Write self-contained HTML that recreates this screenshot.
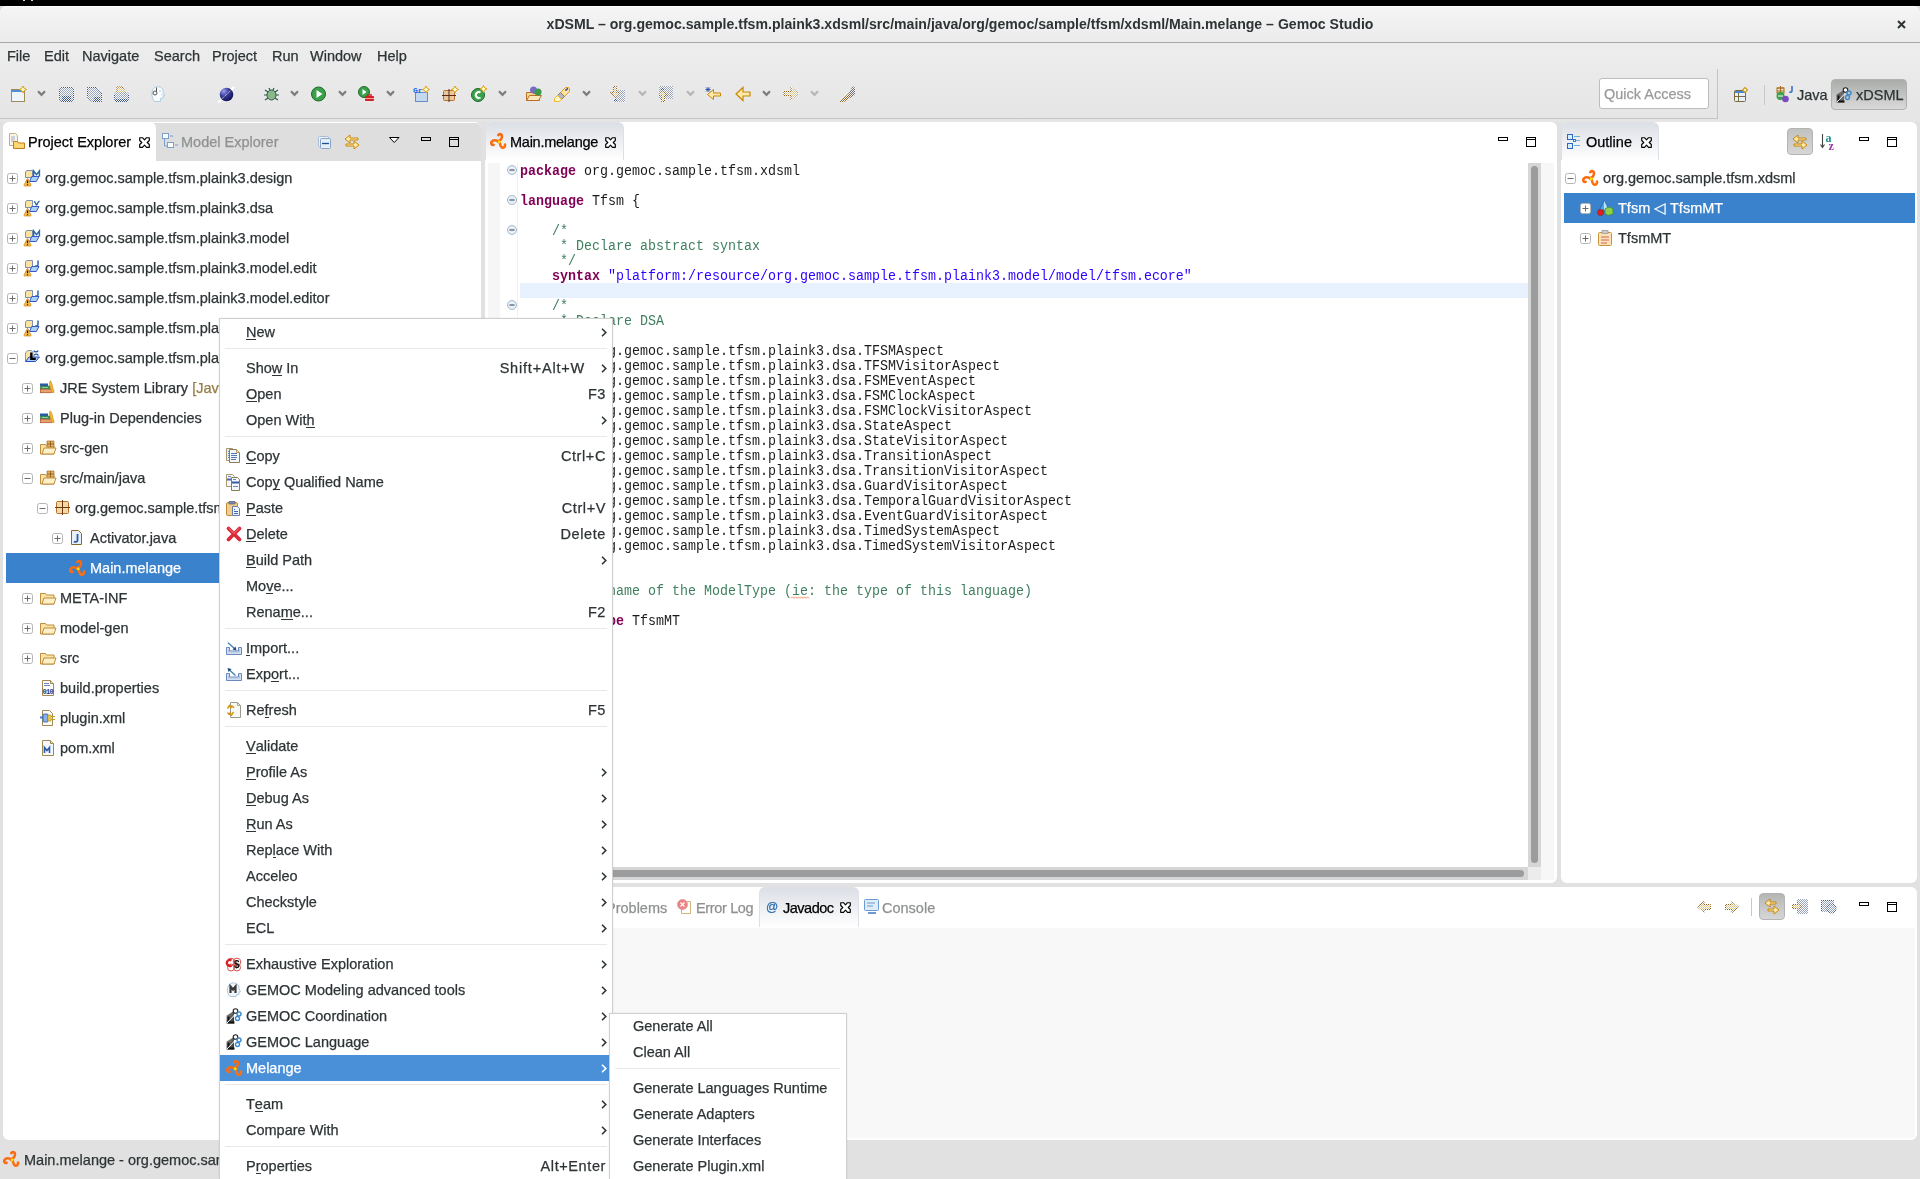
<!DOCTYPE html><html><head><meta charset="utf-8"><style>
*{box-sizing:border-box;margin:0;padding:0}
html,body{width:1920px;height:1179px;overflow:hidden;background:#e1e1e1;font-family:"Liberation Sans", sans-serif;font-size:14.5px;color:#2e3436}
.abs{position:absolute}
.t,.m{will-change:transform}
.t{-webkit-text-stroke:0.25px currentColor}
.t{position:absolute;white-space:nowrap;line-height:17px;height:17px}
.m{position:absolute;white-space:pre;font-family:"Liberation Mono", monospace;font-size:13.33px;line-height:15px;height:15px;color:#1a1a1a;transform:scaleY(1.1);transform-origin:0 11px}
.k{color:#7f0055;font-weight:bold}
.c{color:#3f7f5f}
.s{color:#2a00ff}
svg{position:absolute;overflow:visible}
u{text-decoration:none;border-bottom:1px solid currentColor;display:inline-block;line-height:14px}
</style></head><body>
<svg width="0" height="0" style="position:absolute;left:0;top:0"><defs><pattern id="pN" width="2" height="2" patternUnits="userSpaceOnUse"><rect width="2" height="2" fill="#fbfbfb"/><rect width="1" height="1" fill="#3a5488"/><rect x="1" y="1" width="1" height="1" fill="#3a5488"/></pattern><pattern id="pL" width="2" height="2" patternUnits="userSpaceOnUse"><rect width="2" height="2" fill="#fbfbfb"/><rect width="1" height="1" fill="#9aa6bc"/><rect x="1" y="1" width="1" height="1" fill="#9aa6bc"/></pattern><pattern id="pG" width="2" height="2" patternUnits="userSpaceOnUse"><rect width="2" height="2" fill="#fbfbfb"/><rect width="1" height="1" fill="#94621a"/><rect x="1" y="1" width="1" height="1" fill="#94621a"/></pattern><pattern id="pY" width="2" height="2" patternUnits="userSpaceOnUse"><rect width="2" height="2" fill="#fbfbfb"/><rect width="1" height="1" fill="#d8c890"/><rect x="1" y="1" width="1" height="1" fill="#d8c890"/></pattern><pattern id="pK" width="2" height="2" patternUnits="userSpaceOnUse"><rect width="2" height="2" fill="#f0f0f0"/><rect width="1" height="1" fill="#707070"/><rect x="1" y="1" width="1" height="1" fill="#707070"/></pattern></defs></svg>
<div class="abs" style="left:0px;top:0px;width:1920px;height:6px;background:#000"></div>
<div class="abs" style="left:0px;top:6px;width:1920px;height:37px;background:linear-gradient(#f5f5f5,#ebebeb);border-top:1px solid #fff;border-radius:7px 7px 0 0;border-bottom:1px solid #a9a9a7"></div>
<div class="abs" style="left:23px;top:0px;width:2px;height:1px;background:#ddd"></div>
<div class="abs" style="left:31px;top:0px;width:2px;height:1px;background:#ddd"></div>
<div class="t" style="left:2px;width:1916px;top:16px;text-align:center;font-weight:bold;font-size:14.1px;color:#2e3436;-webkit-text-stroke:0">xDSML – org.gemoc.sample.tfsm.plaink3.xdsml/src/main/java/org/gemoc/sample/tfsm/xdsml/Main.melange – Gemoc Studio</div>
<svg style="left:1897px;top:20px;" width="9" height="9" viewBox="0 0 9 9"><path d="M1 1L8 8M8 1L1 8" stroke="#2e3436" stroke-width="2"/></svg>
<div class="abs" style="left:0px;top:43px;width:1920px;height:79px;background:linear-gradient(#ededed,#e5e5e5)"></div>
<div class="abs" style="left:0px;top:118px;width:1718px;height:1px;background:#c4c4c4"></div>
<div class="abs" style="left:1717px;top:69px;width:1px;height:50px;background:#c4c4c4"></div>
<div class="t" style="left:7px;top:48px;">File</div>
<div class="t" style="left:44px;top:48px;">Edit</div>
<div class="t" style="left:82px;top:48px;">Navigate</div>
<div class="t" style="left:154px;top:48px;">Search</div>
<div class="t" style="left:212px;top:48px;">Project</div>
<div class="t" style="left:272px;top:48px;">Run</div>
<div class="t" style="left:310px;top:48px;">Window</div>
<div class="t" style="left:377px;top:48px;">Help</div>
<svg style="left:11px;top:86px;" width="16" height="16" viewBox="0 0 16 16"><rect x="0.5" y="3.5" width="13" height="12" fill="#eef5fc" stroke="#a08a55"/><rect x="1" y="4" width="12" height="2" fill="#4a90d9"/><path d="M12 0.0L13.2 2.3L15.5 3.5L13.2 4.7L12 7.0L10.8 4.7L8.5 3.5L10.8 2.3Z" fill="#fffbd0" stroke="#d9a010" stroke-width="1"/></svg>
<svg style="left:37px;top:90px;" width="10" height="7" viewBox="0 0 10 7"><path d="M1 1.2L4.5 4.8L8 1.2" fill="none" stroke="#7b7d7b" stroke-width="2.2"/></svg>
<svg style="left:59px;top:87px;" width="16" height="16" viewBox="0 0 16 16"><rect x="0" y="0" width="15" height="15" rx="2" fill="url(#pL)"/><rect x="0.5" y="0.5" width="14" height="14" rx="2" fill="none" stroke="url(#pN)"/><rect x="3" y="9" width="9" height="6" fill="url(#pN)"/></svg>
<svg style="left:87px;top:87px;" width="16" height="16" viewBox="0 0 16 16"><path d="M0 0h9l6 6v9H5L0 10z" fill="url(#pL)"/><path d="M0.5 0.5h8.5l5.5 5.5v8.5H5L0.5 10z" fill="none" stroke="url(#pN)"/><rect x="7" y="10" width="6" height="5" fill="url(#pN)"/></svg>
<svg style="left:114px;top:87px;" width="16" height="16" viewBox="0 0 16 16"><path d="M3 0h5l3 4v5H3z" fill="url(#pY)" stroke="url(#pG)"/><rect x="0" y="5" width="15" height="10" rx="3" fill="url(#pL)"/><path d="M0.5 8v3c0 2 1 3.5 3 3.5h8c2 0 3-1.5 3-3.5V8" fill="none" stroke="url(#pN)"/><rect x="1" y="12" width="13" height="3" fill="url(#pN)"/></svg>
<svg style="left:151px;top:86px;" width="16" height="16" viewBox="0 0 16 16"><path d="M3.5 15.5c-1.5-2-3-5-2.5-9C1.5 2 4.5 0.5 7.5 0.8c3 0.3 5 2.5 4.7 5.5l1.5 3-1.5 0.5v2l-2.5 0.5v3z" fill="#fbfdfe" stroke="#a8cde0"/><circle cx="9" cy="5" r="1.2" fill="#cfe4f0"/><circle cx="11" cy="8.5" r="1" fill="#cfe4f0"/><path d="M5.5 1.5v5" stroke="#555" stroke-width="1"/><circle cx="4" cy="7" r="2" fill="#fff" stroke="#555" stroke-width="1"/></svg>
<svg style="left:218px;top:87px;" width="16" height="16" viewBox="0 0 16 16"><defs><radialGradient id="gg" cx="0.3" cy="0.25" r="0.85"><stop offset="0" stop-color="#9aa0f0"/><stop offset="0.45" stop-color="#3a3a98"/><stop offset="1" stop-color="#0c0c48"/></radialGradient></defs><circle cx="8.5" cy="7.5" r="6.8" fill="url(#gg)"/><path d="M1 14.5L15.5 1" stroke="#fff" stroke-width="0.9" stroke-dasharray="1.2 0.8" opacity="0.85"/><path d="M0.5 15l2-1.5M14 2l1.5-1.5" stroke="#fff" stroke-width="2" stroke-linecap="round"/></svg>
<svg style="left:263px;top:86px;" width="16" height="16" viewBox="0 0 16 16"><ellipse cx="8.5" cy="9" rx="4.5" ry="5" fill="#8ab88a" stroke="#2f5a4a"/><path d="M2 4l3 2M1 9h3M2 14l3-2M15 4l-3 2M16 9h-3M15 14l-3-2M6 2l1 2M11 2l-1 2" stroke="#2f5a4a" stroke-width="1.2"/></svg>
<svg style="left:290px;top:90px;" width="10" height="7" viewBox="0 0 10 7"><path d="M1 1.2L4.5 4.8L8 1.2" fill="none" stroke="#7b7d7b" stroke-width="2.2"/></svg>
<svg style="left:311px;top:86px;" width="16" height="16" viewBox="0 0 16 16"><circle cx="7.5" cy="8" r="7" fill="#3ba04a" stroke="#1f6a2a"/><path d="M5.5 4l6 4-6 4z" fill="#fff"/></svg>
<svg style="left:338px;top:90px;" width="10" height="7" viewBox="0 0 10 7"><path d="M1 1.2L4.5 4.8L8 1.2" fill="none" stroke="#7b7d7b" stroke-width="2.2"/></svg>
<svg style="left:358px;top:86px;" width="16" height="16" viewBox="0 0 16 16"><circle cx="6" cy="6" r="5.5" fill="#3ba04a" stroke="#1f6a2a"/><path d="M4.5 3l4 3-4 3z" fill="#fff"/><rect x="7" y="10" width="9" height="5" rx="1" fill="#d42020"/><path d="M9 9h5" stroke="#d42020" stroke-width="1.5"/><path d="M7 12.5h9" stroke="#fff" stroke-width="0.6"/></svg>
<svg style="left:386px;top:90px;" width="10" height="7" viewBox="0 0 10 7"><path d="M1 1.2L4.5 4.8L8 1.2" fill="none" stroke="#7b7d7b" stroke-width="2.2"/></svg>
<svg style="left:413px;top:86px;" width="16" height="16" viewBox="0 0 16 16"><rect x="2.5" y="6.5" width="12" height="9" fill="#c4d8f0" stroke="#6a8ac8"/><text x="0" y="7" font-size="8" font-family="Liberation Mono" font-weight="bold" fill="#1a6af0">Gr</text><path d="M13 0.0L14.2 2.3L16.5 3.5L14.2 4.7L13 7.0L11.8 4.7L9.5 3.5L11.8 2.3Z" fill="#fffbd0" stroke="#d9a010" stroke-width="1"/></svg>
<svg style="left:442px;top:86px;" width="16" height="16" viewBox="0 0 16 16"><rect x="1.5" y="4.5" width="11" height="10" rx="1" fill="#e8c8a0" stroke="#b8702a"/><path d="M7 3v13M0 9.5h14" stroke="#5a2a10"/><path d="M13 0.0L14.2 2.3L16.5 3.5L14.2 4.7L13 7.0L11.8 4.7L9.5 3.5L11.8 2.3Z" fill="#fffbd0" stroke="#d9a010" stroke-width="1"/></svg>
<svg style="left:470px;top:86px;" width="16" height="16" viewBox="0 0 16 16"><circle cx="8" cy="9" r="6.5" fill="#3ba04a" stroke="#1f6a2a"/><path d="M10.5 6.5a3 3 0 1 0 0 5" fill="none" stroke="#fff" stroke-width="2"/><path d="M13.5 -0.5L14.7 1.8L17.0 3L14.7 4.2L13.5 6.5L12.3 4.2L10.0 3L12.3 1.8Z" fill="#fffbd0" stroke="#d9a010" stroke-width="1"/></svg>
<svg style="left:498px;top:90px;" width="10" height="7" viewBox="0 0 10 7"><path d="M1 1.2L4.5 4.8L8 1.2" fill="none" stroke="#7b7d7b" stroke-width="2.2"/></svg>
<svg style="left:526px;top:86px;" width="16" height="16" viewBox="0 0 16 16"><path d="M0.5 6.5h6l1 1h6v7h-13z" fill="#f7d591" stroke="#b8702a"/><path d="M0.5 14.5l3-5h12l-3 5z" fill="#fbe7b8" stroke="#b8702a"/><circle cx="7.5" cy="4" r="3.5" fill="#7a6ac8"/><circle cx="12" cy="6" r="3.5" fill="#3a9a4a"/></svg>
<svg style="left:554px;top:86px;" width="16" height="16" viewBox="0 0 16 16"><path d="M6.5 6.5L11.5 1.5h3l1 1v3l-5 5z" fill="#fbe3a0" stroke="#e49a1c"/><path d="M3.5 9.5l3-3 4 4-3 3z" fill="#b8b4c0" stroke="#9a7a40"/><path d="M0.5 15.5v-3l3-3 4 4-2.5 2z" fill="#fff8c8" stroke="#f0b830"/><circle cx="12" cy="4" r="0.9" fill="#2a4ab0"/><circle cx="13.3" cy="3" r="0.9" fill="#2a4ab0"/></svg>
<svg style="left:582px;top:90px;" width="10" height="7" viewBox="0 0 10 7"><path d="M1 1.2L4.5 4.8L8 1.2" fill="none" stroke="#7b7d7b" stroke-width="2.2"/></svg>
<svg style="left:610px;top:86px;" width="16" height="16" viewBox="0 0 16 16"><rect x="5" y="4" width="10" height="12" fill="url(#pL)"/><path d="M3.5 0.5h3v6h3l-4.5 5-4.5-5h3z" fill="url(#pY)" stroke="url(#pG)"/><rect x="4" y="13" width="3" height="2" fill="url(#pN)"/></svg>
<svg style="left:638px;top:90px;" width="10" height="7" viewBox="0 0 10 7"><path d="M1 1.2L4.5 4.8L8 1.2" fill="none" stroke="#b5b7b5" stroke-width="2.2"/></svg>
<svg style="left:658px;top:86px;" width="16" height="16" viewBox="0 0 16 16"><rect x="1" y="0" width="14" height="13" fill="url(#pL)"/><path d="M3.5 15.5h3v-6h3l-4.5-5-4.5 5h3z" fill="url(#pY)" stroke="url(#pG)"/><rect x="3" y="2" width="3" height="2" fill="url(#pN)"/></svg>
<svg style="left:686px;top:90px;" width="10" height="7" viewBox="0 0 10 7"><path d="M1 1.2L4.5 4.8L8 1.2" fill="none" stroke="#b5b7b5" stroke-width="2.2"/></svg>
<svg style="left:705px;top:86px;" width="16" height="16" viewBox="0 0 16 16"><path d="M15.5 7h-7v-3.5l-6 5 6 5v-3.5h7z" fill="#fde9a8" stroke="#c8860a"/><path d="M3 1v5M0.5 3.5h5M1 1.5l4 4M5 1.5l-4 4" stroke="#2a50a8" stroke-width="0.9"/></svg>
<svg style="left:735px;top:86px;" width="16" height="16" viewBox="0 0 16 16"><path d="M15 6h-7v-4.5l-7 6.5 7 6.5v-4.5h7z" fill="#fde9a8" stroke="#c8860a" stroke-width="1.2"/></svg>
<svg style="left:762px;top:90px;" width="10" height="7" viewBox="0 0 10 7"><path d="M1 1.2L4.5 4.8L8 1.2" fill="none" stroke="#7b7d7b" stroke-width="2.2"/></svg>
<svg style="left:783px;top:86px;" width="16" height="16" viewBox="0 0 16 16"><path d="M1 5.5h7v-4.5l7 6.5-7 6.5v-4.5h-7z" fill="url(#pY)" stroke="url(#pG)"/></svg>
<svg style="left:810px;top:90px;" width="10" height="7" viewBox="0 0 10 7"><path d="M1 1.2L4.5 4.8L8 1.2" fill="none" stroke="#b5b7b5" stroke-width="2.2"/></svg>
<svg style="left:839px;top:86px;" width="16" height="16" viewBox="0 0 16 16"><path d="M9 8l5-8 2 2v7l-5 3z" fill="url(#pK)"/><path d="M0 16l9-8 3 3-7 5z" fill="url(#pG)"/></svg>
<div class="abs" style="left:1599px;top:78px;width:110px;height:31px;background:#fff;border:1px solid #bdbdbd;border-radius:3px"></div>
<div class="t" style="left:1604px;top:86px;color:#9a9a9a">Quick Access</div>
<svg style="left:1734px;top:87px;" width="16" height="16" viewBox="0 0 16 16"><rect x="0.5" y="3.5" width="11" height="11" rx="1" fill="#e4f2fc" stroke="#7a6a40"/><rect x="1" y="4" width="10" height="2" fill="#4a88d0"/><path d="M4.5 6v8.5M1 9.5h10.5" stroke="#7a6a40"/><path d="M11 0.5L13.5 3L11 5.5L8.5 3z" fill="#fff8d0" stroke="#c89a10" stroke-width="1.1"/></svg>
<div class="abs" style="left:1764px;top:85px;width:1px;height:20px;background:#c8c8c8"></div>
<svg style="left:1776px;top:86px;" width="18" height="16" viewBox="0 0 18 16"><path d="M1 2h7M4.5 0v7M1 5h7" stroke="#a86d1a" stroke-width="1.1" fill="none"/><rect x="1" y="2" width="7" height="5" fill="none" stroke="#a86d1a"/><circle cx="4.5" cy="10" r="4" fill="#3ba04a"/><path d="M2 10h5" stroke="#fff" stroke-width="1"/><circle cx="9.5" cy="13" r="3.3" fill="#7a4ac0"/><path d="M16 0v5c0 1.5-2 1.7-2.5 0.7" fill="none" stroke="#2a6ac8" stroke-width="1.5"/></svg>
<div class="t" style="left:1797px;top:87px;">Java</div>
<div class="abs" style="left:1831px;top:79px;width:76px;height:31px;background:linear-gradient(#a9aca9,#dadada);border:1px solid #b0b0b0;border-radius:4px"></div>
<svg style="left:1836px;top:87px;" width="16" height="16" viewBox="0 0 16 16"><path d="M0.5 7.5L8 3v12.5H0.5z" fill="#6a6a6a"/><path d="M1.5 8.5v7h7v-2h-5v-5z" fill="#111"/><path d="M1 15l8-8.5" stroke="#fff" stroke-width="1"/><circle cx="9.5" cy="3" r="2.3" fill="#fff" stroke="#222" stroke-width="1.1"/><circle cx="13" cy="6" r="2" fill="none" stroke="#3a8ad0" stroke-width="1.4"/><circle cx="11.5" cy="10.5" r="2" fill="none" stroke="#3a8ad0" stroke-width="1.4"/></svg>
<div class="t" style="left:1856px;top:87px;">xDSML</div>
<div class="abs" style="left:3px;top:122px;width:478px;height:1018px;background:#fff;border-radius:6px"></div>
<div class="abs" style="left:140px;top:123px;width:341px;height:38px;background:#dedede;border-radius:0 5px 0 0"></div>
<div class="abs" style="left:3px;top:122px;width:153px;height:39px;background:#fff;border-radius:6px 6px 0 0"></div>
<svg style="left:9px;top:133px;" width="16" height="16" viewBox="0 0 16 16"><path d="M0.5 0.5h6l2 2v10h-8z" fill="#f8f4e8" stroke="#b0a070" stroke-width="0.8"/><path d="M2 4h4M2 6h4M2 8h3" stroke="#8aa0c8" stroke-width="0.8"/><path d="M4.5 8.5h4l1 1.5h6v5.5h-11z" fill="#fbd875" stroke="#c07a20"/></svg>
<div class="t" style="left:28px;top:134px;color:#000">Project Explorer</div>
<svg style="left:139px;top:137px;" width="11" height="11" viewBox="0 0 11 11"><path d="M0.7 0.7H3.5L5.5 2.8L7.5 0.7H10.3V3.5L8.2 5.5L10.3 7.5V10.3H7.5L5.5 8.2L3.5 10.3H0.7V7.5L2.8 5.5L0.7 3.5Z" fill="#fff" stroke="#000" stroke-width="1.15" stroke-linejoin="round"/></svg>
<svg style="left:162px;top:133px;" width="16" height="16" viewBox="0 0 16 16"><rect x="0.5" y="0.5" width="6" height="5" fill="#fff" stroke="#7aa0d0"/><path d="M2.5 6v7h3" fill="none" stroke="#7aa0d0"/><rect x="5.5" y="9.5" width="6" height="5" fill="#fff" stroke="#7aa0d0"/><path d="M8 3h3M13 12h3" stroke="#7aa0d0"/></svg>
<div class="t" style="left:181px;top:134px;color:#8f9191">Model Explorer</div>
<svg style="left:318px;top:136px;" width="14" height="14" viewBox="0 0 14 14"><rect x="0.5" y="0.5" width="10" height="10" rx="1" fill="#eef4fb" stroke="#a8bcd8"/><rect x="2.5" y="2.5" width="10" height="10" rx="1" fill="#e4eef9" stroke="#8aa4c8"/><path d="M4 7.5h7" stroke="#1f4f8f" stroke-width="1.3"/></svg>
<svg style="left:344px;top:133px;" width="16" height="16" viewBox="0 0 16 16"><path d="M14 5H6V2L1 6l5 4V7h8z" fill="#fde9a8" stroke="#c8860a"/><path d="M2 11h8V8l5 4-5 4v-3H2z" fill="#fde9a8" stroke="#c8860a"/></svg>
<svg style="left:389px;top:137px;" width="11" height="6" viewBox="0 0 11 6"><path d="M0.5 0.5h9.5L5.25 5.5z" fill="#fff" stroke="#000" stroke-linejoin="round"/></svg>
<svg style="left:421px;top:137px;" width="11" height="5" viewBox="0 0 11 5"><rect x="0.5" y="0.5" width="9" height="3" fill="none" stroke="#000" stroke-width="1"/></svg>
<svg style="left:449px;top:137px;" width="11" height="11" viewBox="0 0 11 11"><rect x="0.5" y="0.5" width="9" height="9" fill="none" stroke="#000" stroke-width="1"/><path d="M1 2.5h8" stroke="#000" stroke-width="1"/></svg>
<svg style="left:7px;top:173px;" width="11" height="11" viewBox="0 0 11 11"><rect x="0.5" y="0.5" width="10" height="10" rx="2" fill="#fff" stroke="#b4b6b3"/><path d="M2.5 5.5H8.5" stroke="#6c6c6c" stroke-width="1"/><path d="M5.5 2.5V8.5" stroke="#6c6c6c" stroke-width="1"/></svg>
<svg style="left:24px;top:170px;" width="16" height="16" viewBox="0 0 16 16"><path d="M1.5 7.5V2l1.2-1.5h5.8v7z" fill="#fde3a0" stroke="#7f8fb0" stroke-width="1"/><path d="M5.5 11.5l2.2-5h7.3l-2.7 5z" fill="#a9d3f7" stroke="#3a56c8" stroke-width="1"/><path d="M9.6 6.5V1l2.9 3.6 2.9-3.6v5.5" fill="none" stroke="#2c6aa6" stroke-width="1.5"/><path d="M3.5 8.3l3.4 6.6c0.3 0.6 0 1-0.6 1H0.7c-0.6 0-0.9-0.4-0.6-1z" fill="#f9c54a" stroke="#d6891c" stroke-width="0.9"/><path d="M3.5 10.6v2.6M3.5 14.2v1" stroke="#1a1a1a" stroke-width="1.3"/></svg>
<div class="t" style="left:45px;top:170px;">org.gemoc.sample.tfsm.plaink3.design</div>
<svg style="left:7px;top:203px;" width="11" height="11" viewBox="0 0 11 11"><rect x="0.5" y="0.5" width="10" height="10" rx="2" fill="#fff" stroke="#b4b6b3"/><path d="M2.5 5.5H8.5" stroke="#6c6c6c" stroke-width="1"/><path d="M5.5 2.5V8.5" stroke="#6c6c6c" stroke-width="1"/></svg>
<svg style="left:24px;top:200px;" width="16" height="16" viewBox="0 0 16 16"><path d="M1.5 7.5V2l1.2-1.5h5.8v7z" fill="#fde3a0" stroke="#7f8fb0" stroke-width="1"/><path d="M5.5 11.5l2.2-5h7.3l-2.7 5z" fill="#a9d3f7" stroke="#3a56c8" stroke-width="1"/><path d="M10 1.5c1.5 0 2 3.5 2.5 3.5s1-2.5 3-4" fill="none" stroke="#2c6aa6" stroke-width="1.4"/><path d="M3.5 8.3l3.4 6.6c0.3 0.6 0 1-0.6 1H0.7c-0.6 0-0.9-0.4-0.6-1z" fill="#f9c54a" stroke="#d6891c" stroke-width="0.9"/><path d="M3.5 10.6v2.6M3.5 14.2v1" stroke="#1a1a1a" stroke-width="1.3"/></svg>
<div class="t" style="left:45px;top:200px;">org.gemoc.sample.tfsm.plaink3.dsa</div>
<svg style="left:7px;top:233px;" width="11" height="11" viewBox="0 0 11 11"><rect x="0.5" y="0.5" width="10" height="10" rx="2" fill="#fff" stroke="#b4b6b3"/><path d="M2.5 5.5H8.5" stroke="#6c6c6c" stroke-width="1"/><path d="M5.5 2.5V8.5" stroke="#6c6c6c" stroke-width="1"/></svg>
<svg style="left:24px;top:230px;" width="16" height="16" viewBox="0 0 16 16"><path d="M1.5 7.5V2l1.2-1.5h5.8v7z" fill="#fde3a0" stroke="#7f8fb0" stroke-width="1"/><path d="M5.5 11.5l2.2-5h7.3l-2.7 5z" fill="#a9d3f7" stroke="#3a56c8" stroke-width="1"/><path d="M9.6 6.5V1l2.9 3.6 2.9-3.6v5.5" fill="none" stroke="#2c6aa6" stroke-width="1.5"/><path d="M3.5 8.3l3.4 6.6c0.3 0.6 0 1-0.6 1H0.7c-0.6 0-0.9-0.4-0.6-1z" fill="#f9c54a" stroke="#d6891c" stroke-width="0.9"/><path d="M3.5 10.6v2.6M3.5 14.2v1" stroke="#1a1a1a" stroke-width="1.3"/></svg>
<div class="t" style="left:45px;top:230px;">org.gemoc.sample.tfsm.plaink3.model</div>
<svg style="left:7px;top:263px;" width="11" height="11" viewBox="0 0 11 11"><rect x="0.5" y="0.5" width="10" height="10" rx="2" fill="#fff" stroke="#b4b6b3"/><path d="M2.5 5.5H8.5" stroke="#6c6c6c" stroke-width="1"/><path d="M5.5 2.5V8.5" stroke="#6c6c6c" stroke-width="1"/></svg>
<svg style="left:24px;top:260px;" width="16" height="16" viewBox="0 0 16 16"><path d="M1.5 7.5V2l1.2-1.5h5.8v7z" fill="#fde3a0" stroke="#7f8fb0" stroke-width="1"/><path d="M5.5 11.5l2.2-5h7.3l-2.7 5z" fill="#a9d3f7" stroke="#3a56c8" stroke-width="1"/><path d="M14 0.5v4.2c0 1.4-1.8 1.6-2.6 0.8" fill="none" stroke="#2c6aa6" stroke-width="1.5"/><path d="M3.5 8.3l3.4 6.6c0.3 0.6 0 1-0.6 1H0.7c-0.6 0-0.9-0.4-0.6-1z" fill="#f9c54a" stroke="#d6891c" stroke-width="0.9"/><path d="M3.5 10.6v2.6M3.5 14.2v1" stroke="#1a1a1a" stroke-width="1.3"/></svg>
<div class="t" style="left:45px;top:260px;">org.gemoc.sample.tfsm.plaink3.model.edit</div>
<svg style="left:7px;top:293px;" width="11" height="11" viewBox="0 0 11 11"><rect x="0.5" y="0.5" width="10" height="10" rx="2" fill="#fff" stroke="#b4b6b3"/><path d="M2.5 5.5H8.5" stroke="#6c6c6c" stroke-width="1"/><path d="M5.5 2.5V8.5" stroke="#6c6c6c" stroke-width="1"/></svg>
<svg style="left:24px;top:290px;" width="16" height="16" viewBox="0 0 16 16"><path d="M1.5 7.5V2l1.2-1.5h5.8v7z" fill="#fde3a0" stroke="#7f8fb0" stroke-width="1"/><path d="M5.5 11.5l2.2-5h7.3l-2.7 5z" fill="#a9d3f7" stroke="#3a56c8" stroke-width="1"/><path d="M14 0.5v4.2c0 1.4-1.8 1.6-2.6 0.8" fill="none" stroke="#2c6aa6" stroke-width="1.5"/><path d="M3.5 8.3l3.4 6.6c0.3 0.6 0 1-0.6 1H0.7c-0.6 0-0.9-0.4-0.6-1z" fill="#f9c54a" stroke="#d6891c" stroke-width="0.9"/><path d="M3.5 10.6v2.6M3.5 14.2v1" stroke="#1a1a1a" stroke-width="1.3"/></svg>
<div class="t" style="left:45px;top:290px;">org.gemoc.sample.tfsm.plaink3.model.editor</div>
<svg style="left:7px;top:323px;" width="11" height="11" viewBox="0 0 11 11"><rect x="0.5" y="0.5" width="10" height="10" rx="2" fill="#fff" stroke="#b4b6b3"/><path d="M2.5 5.5H8.5" stroke="#6c6c6c" stroke-width="1"/><path d="M5.5 2.5V8.5" stroke="#6c6c6c" stroke-width="1"/></svg>
<svg style="left:24px;top:320px;" width="16" height="16" viewBox="0 0 16 16"><path d="M1.5 7.5V2l1.2-1.5h5.8v7z" fill="#fde3a0" stroke="#7f8fb0" stroke-width="1"/><path d="M5.5 11.5l2.2-5h7.3l-2.7 5z" fill="#a9d3f7" stroke="#3a56c8" stroke-width="1"/><path d="M14 0.5v4.2c0 1.4-1.8 1.6-2.6 0.8" fill="none" stroke="#2c6aa6" stroke-width="1.5"/><path d="M3.5 8.3l3.4 6.6c0.3 0.6 0 1-0.6 1H0.7c-0.6 0-0.9-0.4-0.6-1z" fill="#f9c54a" stroke="#d6891c" stroke-width="0.9"/><path d="M3.5 10.6v2.6M3.5 14.2v1" stroke="#1a1a1a" stroke-width="1.3"/></svg>
<div class="t" style="left:45px;top:320px;">org.gemoc.sample.tfsm.plaink3.xdsml.api</div>
<svg style="left:7px;top:353px;" width="11" height="11" viewBox="0 0 11 11"><rect x="0.5" y="0.5" width="10" height="10" rx="2" fill="#fff" stroke="#b4b6b3"/><path d="M2.5 5.5H8.5" stroke="#6c6c6c" stroke-width="1"/></svg>
<svg style="left:24px;top:350px;" width="16" height="16" viewBox="0 0 16 16"><path d="M1.5 11V3l2-2.5h4l1.5 2v7z" fill="#fde4a4" stroke="#8a98b8"/><path d="M1.5 11.5l3.5-4.5h10.5l-4 4.5z" fill="#a8d2f4" stroke="#2a48c0"/><path d="M7.3 2.5v6.3h4.5" fill="none" stroke="#000" stroke-width="2.3"/><path d="M9.8 0.6c1 1.6 3.4 1.6 4.4 0M10.2 5.5c0.6-1.8 3.6-1.8 4 0.2" fill="none" stroke="#1a5aa0" stroke-width="1.3"/></svg>
<div class="t" style="left:45px;top:350px;">org.gemoc.sample.tfsm.plaink3.xdsml</div>
<svg style="left:22px;top:383px;" width="11" height="11" viewBox="0 0 11 11"><rect x="0.5" y="0.5" width="10" height="10" rx="2" fill="#fff" stroke="#b4b6b3"/><path d="M2.5 5.5H8.5" stroke="#6c6c6c" stroke-width="1"/><path d="M5.5 2.5V8.5" stroke="#6c6c6c" stroke-width="1"/></svg>
<svg style="left:40px;top:380px;" width="16" height="16" viewBox="0 0 16 16"><rect x="0" y="3.5" width="8" height="2.5" fill="#2a5ab0"/><rect x="0.5" y="6" width="9.5" height="3" fill="#3d9a62" stroke="#2a6a40" stroke-width="0.6"/><path d="M2 7.5h6" stroke="#a0e0b0" stroke-width="0.8"/><rect x="0.5" y="9.2" width="11" height="3.5" fill="#e8a070" stroke="#b05a2a" stroke-width="0.8"/><path d="M10 1c1 0 1.5 1 1.5 2l1 2.5 0.5 3 1 2.5v1.5h-2.5l-0.5-3-1-3-0.5-3z" fill="#f2b830" stroke="#c88a10" stroke-width="0.6"/></svg>
<div class="t" style="left:60px;top:380px;">JRE System Library <span style="color:#957d47">[JavaSE-1.8]</span></div>
<svg style="left:22px;top:413px;" width="11" height="11" viewBox="0 0 11 11"><rect x="0.5" y="0.5" width="10" height="10" rx="2" fill="#fff" stroke="#b4b6b3"/><path d="M2.5 5.5H8.5" stroke="#6c6c6c" stroke-width="1"/><path d="M5.5 2.5V8.5" stroke="#6c6c6c" stroke-width="1"/></svg>
<svg style="left:40px;top:410px;" width="16" height="16" viewBox="0 0 16 16"><rect x="0" y="3.5" width="8" height="2.5" fill="#2a5ab0"/><rect x="0.5" y="6" width="9.5" height="3" fill="#3d9a62" stroke="#2a6a40" stroke-width="0.6"/><path d="M2 7.5h6" stroke="#a0e0b0" stroke-width="0.8"/><rect x="0.5" y="9.2" width="11" height="3.5" fill="#e8a070" stroke="#b05a2a" stroke-width="0.8"/><path d="M10 1c1 0 1.5 1 1.5 2l1 2.5 0.5 3 1 2.5v1.5h-2.5l-0.5-3-1-3-0.5-3z" fill="#f2b830" stroke="#c88a10" stroke-width="0.6"/></svg>
<div class="t" style="left:60px;top:410px;">Plug-in Dependencies</div>
<svg style="left:22px;top:443px;" width="11" height="11" viewBox="0 0 11 11"><rect x="0.5" y="0.5" width="10" height="10" rx="2" fill="#fff" stroke="#b4b6b3"/><path d="M2.5 5.5H8.5" stroke="#6c6c6c" stroke-width="1"/><path d="M5.5 2.5V8.5" stroke="#6c6c6c" stroke-width="1"/></svg>
<svg style="left:40px;top:440px;" width="16" height="16" viewBox="0 0 16 16"><path d="M0.5 4.5h5l1 1.5h7.5v8H0.5z" fill="#fbe3a6" stroke="#b9832c" stroke-width="0.9"/><path d="M2 14l2-6h12l-2 6z" fill="#fdf0c8" stroke="#b9832c" stroke-width="0.9"/><path d="M7 1h7v6H7z" fill="#e6b060" stroke="#a86d1a" stroke-width="0.7"/><path d="M7 4h7M10.5 1v6" stroke="#7a4a10" stroke-width="0.7"/></svg>
<div class="t" style="left:60px;top:440px;">src-gen</div>
<svg style="left:22px;top:473px;" width="11" height="11" viewBox="0 0 11 11"><rect x="0.5" y="0.5" width="10" height="10" rx="2" fill="#fff" stroke="#b4b6b3"/><path d="M2.5 5.5H8.5" stroke="#6c6c6c" stroke-width="1"/></svg>
<svg style="left:40px;top:470px;" width="16" height="16" viewBox="0 0 16 16"><path d="M0.5 4.5h5l1 1.5h7.5v8H0.5z" fill="#fbe3a6" stroke="#b9832c" stroke-width="0.9"/><path d="M2 14l2-6h12l-2 6z" fill="#fdf0c8" stroke="#b9832c" stroke-width="0.9"/><path d="M7 1h7v6H7z" fill="#e6b060" stroke="#a86d1a" stroke-width="0.7"/><path d="M7 4h7M10.5 1v6" stroke="#7a4a10" stroke-width="0.7"/></svg>
<div class="t" style="left:60px;top:470px;">src/main/java</div>
<svg style="left:37px;top:503px;" width="11" height="11" viewBox="0 0 11 11"><rect x="0.5" y="0.5" width="10" height="10" rx="2" fill="#fff" stroke="#b4b6b3"/><path d="M2.5 5.5H8.5" stroke="#6c6c6c" stroke-width="1"/></svg>
<svg style="left:55px;top:500px;" width="16" height="16" viewBox="0 0 16 16"><rect x="1.5" y="1.5" width="12" height="12" rx="1" fill="#f3d9a8" stroke="#b8702a" stroke-width="1"/><path d="M7.5 0v15M0 7.5h15" stroke="#6e3a12" stroke-width="1"/></svg>
<div class="t" style="left:75px;top:500px;">org.gemoc.sample.tfsm.xdsml</div>
<svg style="left:52px;top:533px;" width="11" height="11" viewBox="0 0 11 11"><rect x="0.5" y="0.5" width="10" height="10" rx="2" fill="#fff" stroke="#b4b6b3"/><path d="M2.5 5.5H8.5" stroke="#6c6c6c" stroke-width="1"/><path d="M5.5 2.5V8.5" stroke="#6c6c6c" stroke-width="1"/></svg>
<svg style="left:70px;top:530px;" width="16" height="16" viewBox="0 0 16 16"><path d="M1.5 0.5h7l3 3v11h-10z" fill="#e8f0fa" stroke="#8a6a2a" stroke-width="1"/><path d="M7.5 4v6.5c0 1.5-2.5 1.8-3.5 0.8" fill="none" stroke="#2c5ea8" stroke-width="1.8"/></svg>
<div class="t" style="left:90px;top:530px;">Activator.java</div>
<div class="abs" style="left:6px;top:553px;width:475px;height:30px;background:#3b82cc"></div>
<svg style="left:69px;top:560px;" width="16" height="16" viewBox="0 0 16 16"><g fill="none" stroke-linecap="round"><path d="M8 8.2C10.5 7.5 12.8 5 11.8 2.2C11 0.6 9 0.8 8.3 2.2" stroke="#f96a10" stroke-width="2.6"/><path d="M8.3 8.8C6.5 6.8 3 6.8 1.5 9C0.6 10.6 1.8 12.5 3.6 11.8" stroke="#fb6c12" stroke-width="2.6"/><path d="M9.8 9.5C10.2 12 10.5 14.8 13 14.8C14.6 14.8 15.2 13 15 11.5" stroke="#fd7010" stroke-width="2.6"/></g><circle cx="9.2" cy="8.7" r="1.5" fill="#f5e000"/></svg>
<div class="t" style="left:90px;top:560px;color:#fff">Main.melange</div>
<svg style="left:22px;top:593px;" width="11" height="11" viewBox="0 0 11 11"><rect x="0.5" y="0.5" width="10" height="10" rx="2" fill="#fff" stroke="#b4b6b3"/><path d="M2.5 5.5H8.5" stroke="#6c6c6c" stroke-width="1"/><path d="M5.5 2.5V8.5" stroke="#6c6c6c" stroke-width="1"/></svg>
<svg style="left:40px;top:590px;" width="16" height="16" viewBox="0 0 16 16"><path d="M0.5 3.5h5l1 1.5h7.5v9H0.5z" fill="#fbe3a6" stroke="#b9832c" stroke-width="0.9"/><path d="M2 14l2-6h12l-2 6z" fill="#fdf0c8" stroke="#b9832c" stroke-width="0.9"/></svg>
<div class="t" style="left:60px;top:590px;">META-INF</div>
<svg style="left:22px;top:623px;" width="11" height="11" viewBox="0 0 11 11"><rect x="0.5" y="0.5" width="10" height="10" rx="2" fill="#fff" stroke="#b4b6b3"/><path d="M2.5 5.5H8.5" stroke="#6c6c6c" stroke-width="1"/><path d="M5.5 2.5V8.5" stroke="#6c6c6c" stroke-width="1"/></svg>
<svg style="left:40px;top:620px;" width="16" height="16" viewBox="0 0 16 16"><path d="M0.5 3.5h5l1 1.5h7.5v9H0.5z" fill="#fbe3a6" stroke="#b9832c" stroke-width="0.9"/><path d="M2 14l2-6h12l-2 6z" fill="#fdf0c8" stroke="#b9832c" stroke-width="0.9"/></svg>
<div class="t" style="left:60px;top:620px;">model-gen</div>
<svg style="left:22px;top:653px;" width="11" height="11" viewBox="0 0 11 11"><rect x="0.5" y="0.5" width="10" height="10" rx="2" fill="#fff" stroke="#b4b6b3"/><path d="M2.5 5.5H8.5" stroke="#6c6c6c" stroke-width="1"/><path d="M5.5 2.5V8.5" stroke="#6c6c6c" stroke-width="1"/></svg>
<svg style="left:40px;top:650px;" width="16" height="16" viewBox="0 0 16 16"><path d="M0.5 3.5h5l1 1.5h7.5v9H0.5z" fill="#fbe3a6" stroke="#b9832c" stroke-width="0.9"/><path d="M2 14l2-6h12l-2 6z" fill="#fdf0c8" stroke="#b9832c" stroke-width="0.9"/></svg>
<div class="t" style="left:60px;top:650px;">src</div>
<svg style="left:41px;top:680px;" width="16" height="16" viewBox="0 0 16 16"><path d="M1.5 0.5h8l3 3v12h-11z" fill="#fbfbfb" stroke="#a08850"/><path d="M9.5 0.5v3h3" fill="#f0e0b0" stroke="#a08850"/><path d="M3 3.5h5M3 5.5h6" stroke="#6a88c0"/><text x="1.6" y="14" font-size="7" font-family="Liberation Mono" font-weight="bold" fill="#1a3a80" letter-spacing="-0.7">010</text></svg>
<div class="t" style="left:60px;top:680px;">build.properties</div>
<svg style="left:40px;top:710px;" width="16" height="16" viewBox="0 0 16 16"><path d="M2.5 0.5h7l3 3v12h-10z" fill="#fbfbfb" stroke="#a08850"/><path d="M0 7.5h3" stroke="#4a7ac8" stroke-width="2"/><rect x="3" y="4" width="5" height="8" rx="1" fill="#8ab0e8" stroke="#2a5aa8" stroke-width="0.8"/><rect x="8" y="5" width="3" height="6" fill="#f0d060" stroke="#a88a20" stroke-width="0.6"/><path d="M11 6.5h4M11 9.5h4" stroke="#c8a020" stroke-width="1.2"/></svg>
<div class="t" style="left:60px;top:710px;">plugin.xml</div>
<svg style="left:41px;top:740px;" width="16" height="16" viewBox="0 0 16 16"><path d="M1.5 0.5h8l3 3v12h-11z" fill="#f4f8fc" stroke="#a08850"/><path d="M9.5 0.5v3h3" fill="#f0e0b0" stroke="#a08850"/><path d="M3.5 13V7.5l2.5 3 2.5-3V13" fill="none" stroke="#2a5ab0" stroke-width="1.6"/></svg>
<div class="t" style="left:60px;top:740px;">pom.xml</div>
<div class="abs" style="left:485px;top:122px;width:1072px;height:761px;background:#fff;border-radius:6px"></div>
<div class="abs" style="left:485px;top:122px;width:139px;height:38px;background:linear-gradient(#dcdfe6,#ffffff);border:1px solid #dde0e7;border-bottom:none;border-radius:6px 6px 0 0"></div>
<svg style="left:490px;top:133px;" width="16" height="16" viewBox="0 0 16 16"><g fill="none" stroke-linecap="round"><path d="M8 8.2C10.5 7.5 12.8 5 11.8 2.2C11 0.6 9 0.8 8.3 2.2" stroke="#f96a10" stroke-width="2.6"/><path d="M8.3 8.8C6.5 6.8 3 6.8 1.5 9C0.6 10.6 1.8 12.5 3.6 11.8" stroke="#fb6c12" stroke-width="2.6"/><path d="M9.8 9.5C10.2 12 10.5 14.8 13 14.8C14.6 14.8 15.2 13 15 11.5" stroke="#fd7010" stroke-width="2.6"/></g><circle cx="9.2" cy="8.7" r="1.5" fill="#f5e000"/></svg>
<div class="t" style="left:510px;top:134px;color:#000;letter-spacing:-0.25px">Main.melange</div>
<svg style="left:605px;top:137px;" width="11" height="11" viewBox="0 0 11 11"><path d="M0.7 0.7H3.5L5.5 2.8L7.5 0.7H10.3V3.5L8.2 5.5L10.3 7.5V10.3H7.5L5.5 8.2L3.5 10.3H0.7V7.5L2.8 5.5L0.7 3.5Z" fill="#fff" stroke="#000" stroke-width="1.15" stroke-linejoin="round"/></svg>
<svg style="left:1498px;top:137px;" width="11" height="5" viewBox="0 0 11 5"><rect x="0.5" y="0.5" width="9" height="3" fill="none" stroke="#000" stroke-width="1"/></svg>
<svg style="left:1526px;top:137px;" width="11" height="11" viewBox="0 0 11 11"><rect x="0.5" y="0.5" width="9" height="9" fill="none" stroke="#000" stroke-width="1"/><path d="M1 2.5h8" stroke="#000" stroke-width="1"/></svg>
<div class="abs" style="left:488px;top:163px;width:12px;height:704px;background:#f6f6f6"></div>
<div class="abs" style="left:517px;top:163px;width:1px;height:704px;background:#f2f2f2"></div>
<div class="abs" style="left:520px;top:283px;width:1008px;height:15px;background:#e8f2fe"></div>
<div class="abs" style="left:1528px;top:163px;width:13px;height:704px;background:#d6d6d6"></div>
<div class="abs" style="left:1531px;top:166px;width:7px;height:697px;background:#9b9c9e;border-radius:4px"></div>
<div class="abs" style="left:488px;top:867px;width:1040px;height:13px;background:#d6d6d6"></div>
<div class="abs" style="left:491px;top:870px;width:1033px;height:7px;background:#9b9c9e;border-radius:4px"></div>
<div class="abs" style="left:1528px;top:867px;width:13px;height:13px;background:#ececec"></div>
<div class="abs" style="left:1541px;top:163px;width:13px;height:717px;background:#f7f7f7"></div>
<div class="m" style="left:520px;top:164px"><span class="k">package</span> org.gemoc.sample.tfsm.xdsml</div>
<div class="m" style="left:520px;top:194px"><span class="k">language</span> Tfsm {</div>
<div class="m" style="left:520px;top:224px">    <span class="c">/*</span></div>
<div class="m" style="left:520px;top:239px">    <span class="c"> * Declare abstract syntax</span></div>
<div class="m" style="left:520px;top:254px">    <span class="c"> */</span></div>
<div class="m" style="left:520px;top:269px">    <span class="k">syntax</span> <span class="s">"platform:/resource/org.gemoc.sample.tfsm.plaink3.model/model/tfsm.ecore"</span></div>
<div class="m" style="left:520px;top:299px">    <span class="c">/*</span></div>
<div class="m" style="left:520px;top:314px">    <span class="c"> * Declare DSA</span></div>
<div class="m" style="left:520px;top:329px">    <span class="c"> */</span></div>
<div class="m" style="left:520px;top:344px">    <span class="k">with</span> org.gemoc.sample.tfsm.plaink3.dsa.TFSMAspect</div>
<div class="m" style="left:520px;top:359px">    <span class="k">with</span> org.gemoc.sample.tfsm.plaink3.dsa.TFSMVisitorAspect</div>
<div class="m" style="left:520px;top:374px">    <span class="k">with</span> org.gemoc.sample.tfsm.plaink3.dsa.FSMEventAspect</div>
<div class="m" style="left:520px;top:389px">    <span class="k">with</span> org.gemoc.sample.tfsm.plaink3.dsa.FSMClockAspect</div>
<div class="m" style="left:520px;top:404px">    <span class="k">with</span> org.gemoc.sample.tfsm.plaink3.dsa.FSMClockVisitorAspect</div>
<div class="m" style="left:520px;top:419px">    <span class="k">with</span> org.gemoc.sample.tfsm.plaink3.dsa.StateAspect</div>
<div class="m" style="left:520px;top:434px">    <span class="k">with</span> org.gemoc.sample.tfsm.plaink3.dsa.StateVisitorAspect</div>
<div class="m" style="left:520px;top:449px">    <span class="k">with</span> org.gemoc.sample.tfsm.plaink3.dsa.TransitionAspect</div>
<div class="m" style="left:520px;top:464px">    <span class="k">with</span> org.gemoc.sample.tfsm.plaink3.dsa.TransitionVisitorAspect</div>
<div class="m" style="left:520px;top:479px">    <span class="k">with</span> org.gemoc.sample.tfsm.plaink3.dsa.GuardVisitorAspect</div>
<div class="m" style="left:520px;top:494px">    <span class="k">with</span> org.gemoc.sample.tfsm.plaink3.dsa.TemporalGuardVisitorAspect</div>
<div class="m" style="left:520px;top:509px">    <span class="k">with</span> org.gemoc.sample.tfsm.plaink3.dsa.EventGuardVisitorAspect</div>
<div class="m" style="left:520px;top:524px">    <span class="k">with</span> org.gemoc.sample.tfsm.plaink3.dsa.TimedSystemAspect</div>
<div class="m" style="left:520px;top:539px">    <span class="k">with</span> org.gemoc.sample.tfsm.plaink3.dsa.TimedSystemVisitorAspect</div>
<div class="m" style="left:520px;top:569px">    <span class="c">/*</span></div>
<div class="m" style="left:520px;top:584px">    <span class="c"> * The name of the ModelType (ie: the type of this language)</span></div>
<div class="m" style="left:520px;top:599px">    <span class="c"> */</span></div>
<div class="m" style="left:520px;top:614px">    <span class="k">exactType</span> TfsmMT</div>
<div class="m" style="left:520px;top:629px">}</div>
<svg style="left:507px;top:165px;" width="10" height="10" viewBox="0 0 10 10"><circle cx="5" cy="5" r="4.5" fill="#e6f0f8" stroke="#a8b8c8"/><path d="M2.5 5h5" stroke="#556" stroke-width="1.2"/></svg>
<svg style="left:507px;top:195px;" width="10" height="10" viewBox="0 0 10 10"><circle cx="5" cy="5" r="4.5" fill="#e6f0f8" stroke="#a8b8c8"/><path d="M2.5 5h5" stroke="#556" stroke-width="1.2"/></svg>
<svg style="left:507px;top:225px;" width="10" height="10" viewBox="0 0 10 10"><circle cx="5" cy="5" r="4.5" fill="#e6f0f8" stroke="#a8b8c8"/><path d="M2.5 5h5" stroke="#556" stroke-width="1.2"/></svg>
<svg style="left:507px;top:300px;" width="10" height="10" viewBox="0 0 10 10"><circle cx="5" cy="5" r="4.5" fill="#e6f0f8" stroke="#a8b8c8"/><path d="M2.5 5h5" stroke="#556" stroke-width="1.2"/></svg>
<svg style="left:507px;top:570px;" width="10" height="10" viewBox="0 0 10 10"><circle cx="5" cy="5" r="4.5" fill="#e6f0f8" stroke="#a8b8c8"/><path d="M2.5 5h5" stroke="#556" stroke-width="1.2"/></svg>
<svg style="left:791px;top:596px;" width="18" height="4" viewBox="0 0 18 4"><path d="M0 3l1.5 -2l1.5 2l1.5 -2l1.5 2l1.5 -2l1.5 2l1.5 -2l1.5 2l1.5 -2l1.5 2l1.5 -2l1.5 2" fill="none" stroke="#f8885a" stroke-width="1" transform="scale(1,0.8)"/></svg>
<div class="abs" style="left:1561px;top:122px;width:356px;height:761px;background:#fff;border-radius:6px"></div>
<div class="abs" style="left:1561px;top:122px;width:98px;height:38px;background:linear-gradient(#dcdfe6,#ffffff);border:1px solid #dde0e7;border-bottom:none;border-radius:6px 6px 0 0"></div>
<svg style="left:1567px;top:134px;" width="14" height="16" viewBox="0 0 14 16"><rect x="0.5" y="0.5" width="5" height="5" fill="#dcecfa" stroke="#2a6ac0"/><rect x="0.5" y="9.5" width="5" height="5" fill="#dcecfa" stroke="#2a6ac0"/><rect x="6.5" y="5.5" width="2" height="2" fill="#fff" stroke="#2a6ac0" stroke-width="0.9"/><path d="M7 2.5h6M9 6.5h4M7 11.5h6" stroke="#6aaee0" stroke-width="1"/></svg>
<div class="t" style="left:1586px;top:134px;color:#000">Outline</div>
<svg style="left:1641px;top:137px;" width="11" height="11" viewBox="0 0 11 11"><path d="M0.7 0.7H3.5L5.5 2.8L7.5 0.7H10.3V3.5L8.2 5.5L10.3 7.5V10.3H7.5L5.5 8.2L3.5 10.3H0.7V7.5L2.8 5.5L0.7 3.5Z" fill="#fff" stroke="#000" stroke-width="1.15" stroke-linejoin="round"/></svg>
<div class="abs" style="left:1787px;top:128px;width:26px;height:27px;background:linear-gradient(#c0c2c0,#d6d6d6);border:1px solid #b4b4b4;border-radius:4px"></div>
<svg style="left:1792px;top:133px;" width="16" height="16" viewBox="0 0 16 16"><path d="M14 5H6V2L1 6l5 4V7h8z" fill="#fde9a8" stroke="#c8860a"/><path d="M2 11h8V8l5 4-5 4v-3H2z" fill="#fde9a8" stroke="#c8860a"/></svg>
<svg style="left:1820px;top:133px;" width="16" height="16" viewBox="0 0 16 16"><path d="M2.5 1v13M0.5 11.5l2 3 2-3" fill="none" stroke="#444" stroke-width="1.1"/><text x="5.5" y="8.5" font-size="12" font-weight="bold" font-family="Liberation Serif" fill="#1a8a8a">a</text><text x="8.5" y="17" font-size="12" font-weight="bold" font-family="Liberation Serif" fill="#9a3aa8">z</text></svg>
<svg style="left:1859px;top:137px;" width="11" height="5" viewBox="0 0 11 5"><rect x="0.5" y="0.5" width="9" height="3" fill="none" stroke="#000" stroke-width="1"/></svg>
<svg style="left:1887px;top:137px;" width="11" height="11" viewBox="0 0 11 11"><rect x="0.5" y="0.5" width="9" height="9" fill="none" stroke="#000" stroke-width="1"/><path d="M1 2.5h8" stroke="#000" stroke-width="1"/></svg>
<svg style="left:1565px;top:173px;" width="11" height="11" viewBox="0 0 11 11"><rect x="0.5" y="0.5" width="10" height="10" rx="2" fill="#fff" stroke="#b4b6b3"/><path d="M2.5 5.5H8.5" stroke="#6c6c6c" stroke-width="1"/></svg>
<svg style="left:1582px;top:170px;" width="16" height="16" viewBox="0 0 16 16"><g fill="none" stroke-linecap="round"><path d="M8 8.2C10.5 7.5 12.8 5 11.8 2.2C11 0.6 9 0.8 8.3 2.2" stroke="#f96a10" stroke-width="2.6"/><path d="M8.3 8.8C6.5 6.8 3 6.8 1.5 9C0.6 10.6 1.8 12.5 3.6 11.8" stroke="#fb6c12" stroke-width="2.6"/><path d="M9.8 9.5C10.2 12 10.5 14.8 13 14.8C14.6 14.8 15.2 13 15 11.5" stroke="#fd7010" stroke-width="2.6"/></g><circle cx="9.2" cy="8.7" r="1.5" fill="#f5e000"/></svg>
<div class="t" style="left:1603px;top:170px;">org.gemoc.sample.tfsm.xdsml</div>
<div class="abs" style="left:1564px;top:193px;width:351px;height:30px;background:#3b82cc"></div>
<svg style="left:1580px;top:203px;" width="11" height="11" viewBox="0 0 11 11"><rect x="0.5" y="0.5" width="10" height="10" rx="2" fill="#fff" stroke="#b4b6b3"/><path d="M2.5 5.5H8.5" stroke="#6c6c6c" stroke-width="1"/><path d="M5.5 2.5V8.5" stroke="#6c6c6c" stroke-width="1"/></svg>
<svg style="left:1597px;top:200px;" width="16" height="16" viewBox="0 0 16 16"><path d="M7 0.5L11.5 10H2.5z" fill="#4aa6ee" stroke="#1a5aa0" stroke-width="0.7"/><path d="M7 0.5L11.5 10H7z" fill="#bfe4ff"/><path d="M8 8.5l5-1.5 3 2v5l-5 1.5-3-2z" fill="#8ad04a" stroke="#3a8a2a" stroke-width="0.7"/><circle cx="3.5" cy="12.5" r="3" fill="#e02020" stroke="#901010" stroke-width="0.5"/></svg>
<div class="t" style="left:1618px;top:200px;color:#fff">Tfsm ◁ TfsmMT</div>
<svg style="left:1580px;top:233px;" width="11" height="11" viewBox="0 0 11 11"><rect x="0.5" y="0.5" width="10" height="10" rx="2" fill="#fff" stroke="#b4b6b3"/><path d="M2.5 5.5H8.5" stroke="#6c6c6c" stroke-width="1"/><path d="M5.5 2.5V8.5" stroke="#6c6c6c" stroke-width="1"/></svg>
<svg style="left:1598px;top:230px;" width="14" height="16" viewBox="0 0 14 16"><rect x="0.5" y="2.5" width="13" height="13" rx="1" fill="#fbe3b8" stroke="#c8963a"/><rect x="4" y="0.5" width="6" height="3" fill="#ccc" stroke="#888" stroke-width="0.6"/><path d="M3 7h8M3 10h8M3 13h6" stroke="#d04040" stroke-width="0.8"/></svg>
<div class="t" style="left:1618px;top:230px;">TfsmMT</div>
<div class="abs" style="left:485px;top:887px;width:1432px;height:253px;background:#fff;border-radius:6px"></div>
<div class="abs" style="left:485px;top:928px;width:1430px;height:210px;background:#f8f8f8"></div>
<div class="t" style="left:606px;top:900px;color:#8f9191">Problems</div>
<svg style="left:677px;top:899px;" width="16" height="16" viewBox="0 0 16 16"><path d="M4.5 2.5h9v12h-9z" fill="#fff" stroke="#c8a060" stroke-width="0.8"/><circle cx="5.5" cy="5.5" r="5" fill="#f08080" stroke="#e0a0a0"/><path d="M3.5 3.5l4 4M7.5 3.5l-4 4" stroke="#fff" stroke-width="1.2"/></svg>
<div class="t" style="left:696px;top:900px;color:#8f9191;letter-spacing:-0.35px">Error Log</div>
<div class="abs" style="left:759px;top:887px;width:100px;height:40px;background:linear-gradient(#dcdfe6,#ffffff);border:1px solid #dde0e7;border-bottom:none;border-radius:6px 6px 0 0"></div>
<div class="t" style="left:766px;top:899px;color:#2a6ab0;font-size:12px">@</div>
<div class="t" style="left:783px;top:900px;color:#000;letter-spacing:-0.5px">Javadoc</div>
<svg style="left:840px;top:902px;" width="11" height="11" viewBox="0 0 11 11"><path d="M0.7 0.7H3.5L5.5 2.8L7.5 0.7H10.3V3.5L8.2 5.5L10.3 7.5V10.3H7.5L5.5 8.2L3.5 10.3H0.7V7.5L2.8 5.5L0.7 3.5Z" fill="#fff" stroke="#000" stroke-width="1.15" stroke-linejoin="round"/></svg>
<svg style="left:864px;top:899px;" width="16" height="16" viewBox="0 0 16 16"><rect x="0.5" y="0.5" width="14" height="11" rx="1" fill="#e0ecf8" stroke="#6a9ad0"/><path d="M3 4h8M3 7h6" stroke="#6a9ad0"/><path d="M4 14h8" stroke="#6a9ad0" stroke-width="2"/></svg>
<div class="t" style="left:882px;top:900px;color:#8f9191">Console</div>
<svg style="left:1697px;top:901px;" width="14" height="12" viewBox="0 0 14 12"><path d="M13.5 3.5H7V0.5L0.5 6 7 11.5V8.5h6.5z" fill="url(#pY)" stroke="url(#pG)"/></svg>
<svg style="left:1725px;top:901px;" width="14" height="12" viewBox="0 0 14 12"><path d="M0.5 3.5H7V0.5L13.5 6 7 11.5V8.5H0.5z" fill="url(#pY)" stroke="url(#pG)"/></svg>
<div class="abs" style="left:1751px;top:898px;width:1px;height:18px;background:#c8c8c8"></div>
<div class="abs" style="left:1759px;top:893px;width:26px;height:27px;background:linear-gradient(#b4b6b4,#d6d6d6);border:1px solid #b4b4b4;border-radius:4px"></div>
<svg style="left:1764px;top:898px;" width="16" height="16" viewBox="0 0 16 16"><path d="M12 4H6V1L1 5l5 4V6h6z" fill="#fde9a8" stroke="#c8860a"/><path d="M4 11h6V8l5 4-5 4v-3H4z" fill="#fde9a8" stroke="#c8860a"/></svg>
<svg style="left:1792px;top:899px;" width="16" height="16" viewBox="0 0 16 16"><rect x="5" y="0" width="11" height="15" rx="1" fill="url(#pL)"/><path d="M0.5 5.5h5V2.5l4 5-4 5V9.5h-5z" fill="url(#pY)" stroke="url(#pG)"/></svg>
<svg style="left:1821px;top:898px;" width="16" height="16" viewBox="0 0 16 16"><rect x="0" y="2" width="13" height="12" fill="url(#pL)"/><path d="M0.5 14V2.5h12" fill="none" stroke="url(#pN)"/><circle cx="10.5" cy="10.5" r="4.5" fill="url(#pL)" stroke="url(#pN)"/></svg>
<svg style="left:1859px;top:902px;" width="11" height="5" viewBox="0 0 11 5"><rect x="0.5" y="0.5" width="9" height="3" fill="none" stroke="#000" stroke-width="1"/></svg>
<svg style="left:1887px;top:902px;" width="11" height="11" viewBox="0 0 11 11"><rect x="0.5" y="0.5" width="9" height="9" fill="none" stroke="#000" stroke-width="1"/><path d="M1 2.5h8" stroke="#000" stroke-width="1"/></svg>
<svg style="left:3px;top:1151px;" width="16" height="16" viewBox="0 0 16 16"><g fill="none" stroke-linecap="round"><path d="M8 8.2C10.5 7.5 12.8 5 11.8 2.2C11 0.6 9 0.8 8.3 2.2" stroke="#f96a10" stroke-width="2.6"/><path d="M8.3 8.8C6.5 6.8 3 6.8 1.5 9C0.6 10.6 1.8 12.5 3.6 11.8" stroke="#fb6c12" stroke-width="2.6"/><path d="M9.8 9.5C10.2 12 10.5 14.8 13 14.8C14.6 14.8 15.2 13 15 11.5" stroke="#fd7010" stroke-width="2.6"/></g><circle cx="9.2" cy="8.7" r="1.5" fill="#f5e000"/></svg>
<div class="t" style="left:24px;top:1152px;">Main.melange - org.gemoc.sample.tfsm.plaink3.xdsml</div>
<div class="abs" style="left:219px;top:318px;width:394px;height:861px;background:#fff;border:1px solid #cfcfcf;border-bottom:none;box-shadow:0 0 2px rgba(0,0,0,0.08)"></div>
<div class="t" style="left:246px;top:324px;color:#2e3436"><u>N</u>ew</div>
<svg style="left:601px;top:328px;" width="6" height="9" viewBox="0 0 6 9"><path d="M1 0.8L4.8 4.5L1 8.2" fill="none" stroke="#2e3436" stroke-width="1.6"/></svg>
<div class="abs" style="left:225px;top:348px;width:382px;height:1px;background:#e8e8e8"></div>
<div class="t" style="left:246px;top:360px;color:#2e3436">Sho<u>w</u> In</div>
<div class="t" style="left:385px;width:200px;text-align:right;top:360px;color:#2e3436;letter-spacing:0.8px">Shift+Alt+W</div>
<svg style="left:601px;top:364px;" width="6" height="9" viewBox="0 0 6 9"><path d="M1 0.8L4.8 4.5L1 8.2" fill="none" stroke="#2e3436" stroke-width="1.6"/></svg>
<div class="t" style="left:246px;top:386px;color:#2e3436"><u>O</u>pen</div>
<div class="t" style="left:406px;width:200px;text-align:right;top:386px;color:#2e3436;letter-spacing:0.6px">F3</div>
<div class="t" style="left:246px;top:412px;color:#2e3436">Open Wit<u>h</u></div>
<svg style="left:601px;top:416px;" width="6" height="9" viewBox="0 0 6 9"><path d="M1 0.8L4.8 4.5L1 8.2" fill="none" stroke="#2e3436" stroke-width="1.6"/></svg>
<div class="abs" style="left:225px;top:436px;width:382px;height:1px;background:#e8e8e8"></div>
<svg style="left:226px;top:448px;" width="16" height="16" viewBox="0 0 16 16"><path d="M0.5 0.5h6l1 1v11h-7z" fill="#e9eff5" stroke="#a8976a"/><path d="M2 3.5h1M2 5.5h1M2 7.5h1M2 9.5h1" stroke="#6a88b8"/><path d="M3.5 1.5h7l3 3v10h-10z" fill="#f5f8fb" stroke="#8c7b55"/><path d="M10.5 1.5v3h3" fill="#f0e0a0" stroke="#b8a060"/><path d="M5 5.5h6M5 7.5h6M5 9.5h6M5 11.5h5" stroke="#5a78b0"/></svg>
<div class="t" style="left:246px;top:448px;color:#2e3436"><u>C</u>opy</div>
<div class="t" style="left:406px;width:200px;text-align:right;top:448px;color:#2e3436;letter-spacing:0.6px">Ctrl+C</div>
<svg style="left:226px;top:474px;" width="16" height="16" viewBox="0 0 16 16"><path d="M0.5 0.5h6l2 2v10h-8z" fill="#f3f6fa" stroke="#a8976a"/><path d="M1 5.5h7" stroke="#4a6ab0" stroke-width="2"/><path d="M2 2.5h3" stroke="#6a88b8"/><path d="M5.5 3.5h6l2 2v11h-8z" fill="#f5f8fb" stroke="#8c7b55"/><path d="M6 8.5h7" stroke="#3a5a9a" stroke-width="2"/><path d="M7 5.5h3M7 12.5h5" stroke="#6a88b8"/></svg>
<div class="t" style="left:246px;top:474px;color:#2e3436">Cop<u>y</u> Qualified Name</div>
<svg style="left:226px;top:500px;" width="16" height="16" viewBox="0 0 16 16"><rect x="0.5" y="2.5" width="11" height="13" rx="1.5" fill="#f2cf88" stroke="#c08838"/><path d="M3 1.5h6v2.5H3z" fill="#7a8aa8" stroke="#5a6a88" stroke-width="0.8"/><path d="M6.5 6.5h5l2 2v7h-7z" fill="#eef4fa" stroke="#6a7aa8"/><path d="M8 9.5h1M8 11.5h4M8 13.5h4" stroke="#3a6ab0"/></svg>
<div class="t" style="left:246px;top:500px;color:#2e3436"><u>P</u>aste</div>
<div class="t" style="left:406px;width:200px;text-align:right;top:500px;color:#2e3436;letter-spacing:0.6px">Ctrl+V</div>
<svg style="left:226px;top:526px;" width="16" height="16" viewBox="0 0 16 16"><path d="M2.5 2.5L13.5 13.5M13.5 2.5L2.5 13.5" stroke="#dc2a3a" stroke-width="3.8" stroke-linecap="round"/><path d="M3 2.6L8 7.2M13 2.6L8 7.2" stroke="#f06a78" stroke-width="1.2" stroke-linecap="round" opacity="0.7"/></svg>
<div class="t" style="left:246px;top:526px;color:#2e3436"><u>D</u>elete</div>
<div class="t" style="left:406px;width:200px;text-align:right;top:526px;color:#2e3436;letter-spacing:0.6px">Delete</div>
<div class="t" style="left:246px;top:552px;color:#2e3436"><u>B</u>uild Path</div>
<svg style="left:601px;top:556px;" width="6" height="9" viewBox="0 0 6 9"><path d="M1 0.8L4.8 4.5L1 8.2" fill="none" stroke="#2e3436" stroke-width="1.6"/></svg>
<div class="t" style="left:246px;top:578px;color:#2e3436">Mo<u>v</u>e...</div>
<div class="t" style="left:246px;top:604px;color:#2e3436">Rena<u>m</u>e...</div>
<div class="t" style="left:406px;width:200px;text-align:right;top:604px;color:#2e3436;letter-spacing:0.6px">F2</div>
<div class="abs" style="left:225px;top:628px;width:382px;height:1px;background:#e8e8e8"></div>
<svg style="left:226px;top:640px;" width="16" height="16" viewBox="0 0 16 16"><g transform="translate(0,2)"><path d="M0.5 5.5v7h15v-7h-3v3.5h-9v-3.5z" fill="#d4e0f2" stroke="#6a88bc"/><path d="M2.5 7.5v2.5h11v-2.5" fill="none" stroke="#a8bce0" stroke-width="0.8"/><path d="M2 0.8l7 6.2" stroke="#3a7ab8" stroke-width="1.2"/><path d="M10.5 8.5l-1-4-3 3z" fill="#1a4a80"/></g></svg>
<div class="t" style="left:246px;top:640px;color:#2e3436"><u>I</u>mport...</div>
<svg style="left:226px;top:666px;" width="16" height="16" viewBox="0 0 16 16"><g transform="translate(0,2)"><path d="M0.5 5.5v7h15v-7h-3v3.5h-9v-3.5z" fill="#d4e0f2" stroke="#6a88bc"/><path d="M2.5 7.5v2.5h11v-2.5" fill="none" stroke="#a8bce0" stroke-width="0.8"/><path d="M9.5 7.5L3 1.5" stroke="#3a7ab8" stroke-width="1.2"/><path d="M1.5 0l4 1-3 3z" fill="#1a4a80"/></g></svg>
<div class="t" style="left:246px;top:666px;color:#2e3436">Exp<u>o</u>rt...</div>
<div class="abs" style="left:225px;top:690px;width:382px;height:1px;background:#e8e8e8"></div>
<svg style="left:226px;top:702px;" width="16" height="16" viewBox="0 0 16 16"><path d="M4.5 0.5h7l3 3v12h-10z" fill="#f8f8f4" stroke="#9a9a90"/><path d="M11.5 0.5v3h3" fill="none" stroke="#b0a880"/><path d="M3.5 4.5a3.5 3.5 0 0 1 4.5 1.5M1.5 6.5l2-3 2 2.5M5.5 12.5a3.5 3.5 0 0 1-4-2M7.5 10l-2 3-2-2.5" fill="none" stroke="#d8920a" stroke-width="1.4"/></svg>
<div class="t" style="left:246px;top:702px;color:#2e3436">Re<u>f</u>resh</div>
<div class="t" style="left:406px;width:200px;text-align:right;top:702px;color:#2e3436;letter-spacing:0.6px">F5</div>
<div class="abs" style="left:225px;top:726px;width:382px;height:1px;background:#e8e8e8"></div>
<div class="t" style="left:246px;top:738px;color:#2e3436"><u>V</u>alidate</div>
<div class="t" style="left:246px;top:764px;color:#2e3436"><u>P</u>rofile As</div>
<svg style="left:601px;top:768px;" width="6" height="9" viewBox="0 0 6 9"><path d="M1 0.8L4.8 4.5L1 8.2" fill="none" stroke="#2e3436" stroke-width="1.6"/></svg>
<div class="t" style="left:246px;top:790px;color:#2e3436"><u>D</u>ebug As</div>
<svg style="left:601px;top:794px;" width="6" height="9" viewBox="0 0 6 9"><path d="M1 0.8L4.8 4.5L1 8.2" fill="none" stroke="#2e3436" stroke-width="1.6"/></svg>
<div class="t" style="left:246px;top:816px;color:#2e3436"><u>R</u>un As</div>
<svg style="left:601px;top:820px;" width="6" height="9" viewBox="0 0 6 9"><path d="M1 0.8L4.8 4.5L1 8.2" fill="none" stroke="#2e3436" stroke-width="1.6"/></svg>
<div class="t" style="left:246px;top:842px;color:#2e3436">Rep<u>l</u>ace With</div>
<svg style="left:601px;top:846px;" width="6" height="9" viewBox="0 0 6 9"><path d="M1 0.8L4.8 4.5L1 8.2" fill="none" stroke="#2e3436" stroke-width="1.6"/></svg>
<div class="t" style="left:246px;top:868px;color:#2e3436">Acceleo</div>
<svg style="left:601px;top:872px;" width="6" height="9" viewBox="0 0 6 9"><path d="M1 0.8L4.8 4.5L1 8.2" fill="none" stroke="#2e3436" stroke-width="1.6"/></svg>
<div class="t" style="left:246px;top:894px;color:#2e3436">Checkstyle</div>
<svg style="left:601px;top:898px;" width="6" height="9" viewBox="0 0 6 9"><path d="M1 0.8L4.8 4.5L1 8.2" fill="none" stroke="#2e3436" stroke-width="1.6"/></svg>
<div class="t" style="left:246px;top:920px;color:#2e3436">ECL</div>
<svg style="left:601px;top:924px;" width="6" height="9" viewBox="0 0 6 9"><path d="M1 0.8L4.8 4.5L1 8.2" fill="none" stroke="#2e3436" stroke-width="1.6"/></svg>
<div class="abs" style="left:225px;top:944px;width:382px;height:1px;background:#e8e8e8"></div>
<svg style="left:226px;top:956px;" width="16" height="16" viewBox="0 0 16 16"><circle cx="5" cy="6" r="3.8" fill="none" stroke="#d85050" stroke-width="1"/><circle cx="11" cy="6" r="3.8" fill="none" stroke="#d85050" stroke-width="1"/><circle cx="5" cy="11.5" r="3.5" fill="none" stroke="#d85050" stroke-width="1"/><circle cx="11" cy="11.5" r="3.5" fill="none" stroke="#d85050" stroke-width="1"/><path d="M5.5 4.5a3 3 0 1 0 0 5" fill="none" stroke="#e02020" stroke-width="2.2"/><text x="8" y="12" font-size="10" font-weight="bold" font-family="Liberation Sans" fill="#111">$</text></svg>
<div class="t" style="left:246px;top:956px;color:#2e3436">Exhaustive Exploration</div>
<svg style="left:601px;top:960px;" width="6" height="9" viewBox="0 0 6 9"><path d="M1 0.8L4.8 4.5L1 8.2" fill="none" stroke="#2e3436" stroke-width="1.6"/></svg>
<svg style="left:226px;top:982px;" width="16" height="16" viewBox="0 0 16 16"><path d="M4 14.5c-2-2-3-5-2.5-8C2.5 2 5.5 0.5 8.5 1c3 0.5 5 3 4.5 6l1.5 2.5-1.5 0.5v2.5l-3 0.5v1.5z" fill="#f2f6fa" stroke="#a8c8dc"/><path d="M4.5 11V4.5l2.5 3 2.5-3V11" fill="none" stroke="#3a3a3a" stroke-width="2.2"/></svg>
<div class="t" style="left:246px;top:982px;color:#2e3436">GEMOC Modeling advanced tools</div>
<svg style="left:601px;top:986px;" width="6" height="9" viewBox="0 0 6 9"><path d="M1 0.8L4.8 4.5L1 8.2" fill="none" stroke="#2e3436" stroke-width="1.6"/></svg>
<svg style="left:226px;top:1008px;" width="16" height="16" viewBox="0 0 16 16"><defs><linearGradient id="gx" x1="0" y1="0" x2="1" y2="1"><stop offset="0" stop-color="#9a9a9a"/><stop offset="1" stop-color="#2a2a2a"/></linearGradient></defs><path d="M0.5 7.5L8 3v12.5H0.5z" fill="url(#gx)"/><path d="M1.5 8.5v7h7v-2h-5v-5z" fill="#111"/><path d="M1 15l8-8.5" stroke="#fff" stroke-width="1"/><circle cx="9.5" cy="3" r="2.3" fill="#fff" stroke="#222" stroke-width="1.1"/><circle cx="13" cy="6" r="2" fill="none" stroke="#3a8ad0" stroke-width="1.4"/><circle cx="11.5" cy="10.5" r="2" fill="none" stroke="#3a8ad0" stroke-width="1.4"/></svg>
<div class="t" style="left:246px;top:1008px;color:#2e3436">GEMOC Coordination</div>
<svg style="left:601px;top:1012px;" width="6" height="9" viewBox="0 0 6 9"><path d="M1 0.8L4.8 4.5L1 8.2" fill="none" stroke="#2e3436" stroke-width="1.6"/></svg>
<svg style="left:226px;top:1034px;" width="16" height="16" viewBox="0 0 16 16"><defs><linearGradient id="gx" x1="0" y1="0" x2="1" y2="1"><stop offset="0" stop-color="#9a9a9a"/><stop offset="1" stop-color="#2a2a2a"/></linearGradient></defs><path d="M0.5 7.5L8 3v12.5H0.5z" fill="url(#gx)"/><path d="M1.5 8.5v7h7v-2h-5v-5z" fill="#111"/><path d="M1 15l8-8.5" stroke="#fff" stroke-width="1"/><circle cx="9.5" cy="3" r="2.3" fill="#fff" stroke="#222" stroke-width="1.1"/><circle cx="13" cy="6" r="2" fill="none" stroke="#3a8ad0" stroke-width="1.4"/><circle cx="11.5" cy="10.5" r="2" fill="none" stroke="#3a8ad0" stroke-width="1.4"/></svg>
<div class="t" style="left:246px;top:1034px;color:#2e3436">GEMOC Language</div>
<svg style="left:601px;top:1038px;" width="6" height="9" viewBox="0 0 6 9"><path d="M1 0.8L4.8 4.5L1 8.2" fill="none" stroke="#2e3436" stroke-width="1.6"/></svg>
<div class="abs" style="left:220px;top:1055px;width:392px;height:26px;background:#4a90d9"></div>
<svg style="left:226px;top:1060px;" width="16" height="16" viewBox="0 0 16 16"><g fill="none" stroke-linecap="round"><path d="M8 8.2C10.5 7.5 12.8 5 11.8 2.2C11 0.6 9 0.8 8.3 2.2" stroke="#f96a10" stroke-width="2.6"/><path d="M8.3 8.8C6.5 6.8 3 6.8 1.5 9C0.6 10.6 1.8 12.5 3.6 11.8" stroke="#fb6c12" stroke-width="2.6"/><path d="M9.8 9.5C10.2 12 10.5 14.8 13 14.8C14.6 14.8 15.2 13 15 11.5" stroke="#fd7010" stroke-width="2.6"/></g><circle cx="9.2" cy="8.7" r="1.5" fill="#f5e000"/></svg>
<div class="t" style="left:246px;top:1060px;color:#fff">Melange</div>
<svg style="left:601px;top:1064px;" width="6" height="9" viewBox="0 0 6 9"><path d="M1 0.8L4.8 4.5L1 8.2" fill="none" stroke="#fff" stroke-width="1.6"/></svg>
<div class="abs" style="left:225px;top:1084px;width:382px;height:1px;background:#e8e8e8"></div>
<div class="t" style="left:246px;top:1096px;color:#2e3436">T<u>e</u>am</div>
<svg style="left:601px;top:1100px;" width="6" height="9" viewBox="0 0 6 9"><path d="M1 0.8L4.8 4.5L1 8.2" fill="none" stroke="#2e3436" stroke-width="1.6"/></svg>
<div class="t" style="left:246px;top:1122px;color:#2e3436">Compare With</div>
<svg style="left:601px;top:1126px;" width="6" height="9" viewBox="0 0 6 9"><path d="M1 0.8L4.8 4.5L1 8.2" fill="none" stroke="#2e3436" stroke-width="1.6"/></svg>
<div class="abs" style="left:225px;top:1146px;width:382px;height:1px;background:#e8e8e8"></div>
<div class="t" style="left:246px;top:1158px;color:#2e3436">P<u>r</u>operties</div>
<div class="t" style="left:406px;width:200px;text-align:right;top:1158px;color:#2e3436;letter-spacing:0.6px">Alt+Enter</div>
<div class="abs" style="left:609px;top:1013px;width:238px;height:166px;background:#fff;border:1px solid #cfcfcf;border-bottom:none;box-shadow:0 0 2px rgba(0,0,0,0.08)"></div>
<div class="t" style="left:633px;top:1018px;">Generate All</div>
<div class="t" style="left:633px;top:1044px;">Clean All</div>
<div class="abs" style="left:615px;top:1068px;width:225px;height:1px;background:#e8e8e8"></div>
<div class="t" style="left:633px;top:1080px;">Generate Languages Runtime</div>
<div class="t" style="left:633px;top:1106px;">Generate Adapters</div>
<div class="t" style="left:633px;top:1132px;">Generate Interfaces</div>
<div class="t" style="left:633px;top:1158px;">Generate Plugin.xml</div>
</body></html>
